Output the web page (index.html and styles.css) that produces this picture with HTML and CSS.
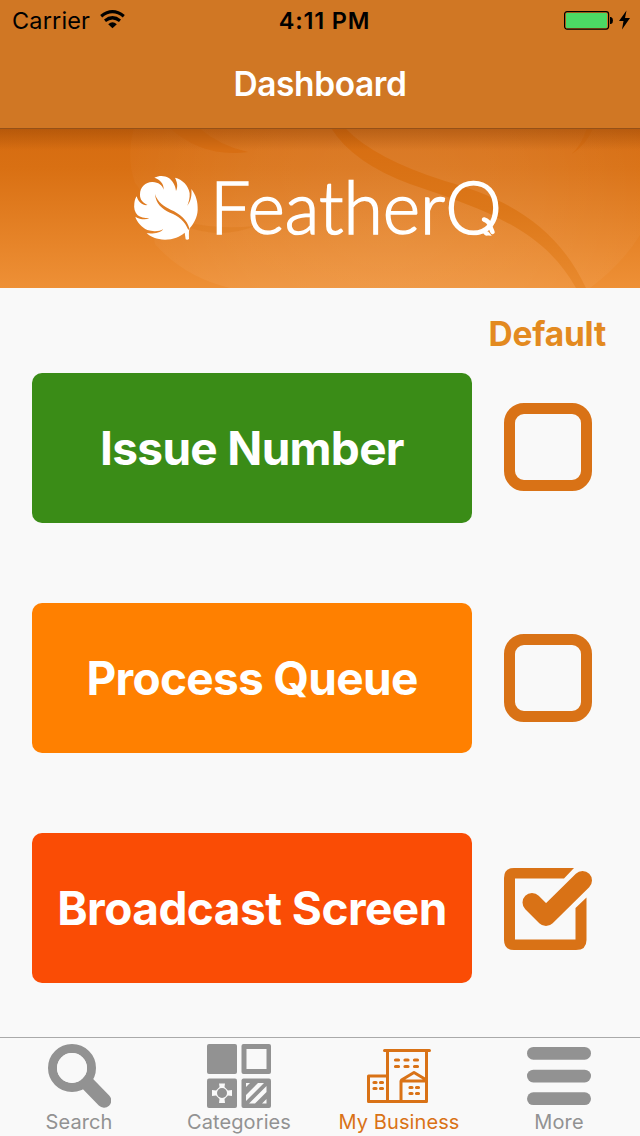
FILE: index.html
```html
<!DOCTYPE html>
<html lang="en">
<head>
<meta charset="utf-8">
<title>Dashboard</title>
<link rel="stylesheet" href="styles.css">
</head>
<body>
<header class="header">
  <div class="status">
    <div class="carrier"><span class="carrier-name">Carrier</span>
      <svg class="wifi" width="25" height="19" viewBox="0 0 25 19"><g fill="none" stroke="#000" stroke-width="3.2"><path d="M1.2 6.2Q12.500-2.800 23.800 6.200"/><path d="M5 10.700Q12.500 4.800 20 10.700"/></g><path d="M8.200 14.200Q12.500 10.500 16.800 14.200L12.500 18.300Z"/></svg>
    </div>
    <span class="time">4:11 PM</span>
    <svg class="battery" width="67" height="22" viewBox="0 0 67 22"><rect x="1.600" y="2.600" width="44" height="17.500" rx="2.500" fill="none" stroke="#000" stroke-width="1.200"/><rect x="3" y="4" width="41" height="15" rx="1" fill="#4cd964"/><path d="M47 8h1q2 .5 2 3.500t-2 3.500h-1z"/><path d="M63.500 1.500L56 12h4.500l-1.500 8.500L67 9h-5z"/></svg>
  </div>
  <h1 class="title">Dashboard</h1>
</header>
<section class="banner">
  <svg width="640" height="160" viewBox="0 128 640 160">
    <defs>
      <linearGradient id="bg" x1="0" y1="0" x2="0" y2="1"><stop offset="0" stop-color="#d56b10"/><stop offset=".25" stop-color="#d97013"/><stop offset="1" stop-color="#ee9036"/></linearGradient>
      <radialGradient id="glow" gradientUnits="userSpaceOnUse" cx="390" cy="225" r="285"><stop offset="0" stop-color="#fff" stop-opacity=".1"/><stop offset=".5" stop-color="#fff" stop-opacity=".07"/><stop offset="1" stop-color="#fff" stop-opacity=".015"/></radialGradient>
      <linearGradient id="vein" x1="0" y1="0" x2="0" y2="1"><stop offset="0" stop-color="#d66c10"/><stop offset=".5" stop-color="#dc7719"/><stop offset="1" stop-color="#e98a2e"/></linearGradient>
      <linearGradient id="shade" x1="0" y1="0" x2="0" y2="1"><stop offset="0" stop-color="#803800" stop-opacity=".38"/><stop offset=".4" stop-color="#803800" stop-opacity=".23"/><stop offset="1" stop-color="#803800" stop-opacity="0"/></linearGradient>
      <clipPath id="baseline"><path d="M200 170h320v65.500H200z"/></clipPath>
    </defs>
    <path fill="url(#bg)" d="M0 128h640v160H0z"/>
    <path fill="url(#glow)" d="M134 128Q126 157 135 183Q148 197 155 244Q184 277 230 288H590Q622 264 640 235V128Z"/>
    <path fill="url(#vein)" d="M331 128Q353 163 410 184C490 211 544 231 576 288H586C556 224 505 198 445 181Q375 159 345 128Z"/>
    <path fill="#d76e13" d="M170 128Q203 158 248 152Q220 146 199 128ZM587 128Q582 144 572 154Q586 145 593 128Z"/>
    <path fill="#d87515" opacity=".3" d="M185 226Q220 240 255 226Q220 230 185 222Z"/>
    <path fill="url(#shade)" d="M0 128h640v22H0z"/>
    <path fill="#955118" d="M0 128h640v1H0z"/>
    <g transform="translate(120 165) scale(.33333)">
      <path fill="#fff" d="M103 38C120 30 135 33 145 38C158 46 167 62 168 78C175 63 171 51 165 38C187 43 206 62 209 85C210 100 206 112 202 122C213 108 216 90 214 72C228 90 234 110 233 135C232 157 222 175 209 190Q206 195 207 222Q202 226 197 223L194 203C180 215 160 224 135 224C110 224 92 216 80 205C98 206 121 206 130 192C118 200 98 200 82 195C65 187 50 170 46 155C60 164 78 164 88 160C72 160 61 157 53 151C44 142 41 130 43 115C44 105 47 98 50 94C55 112 70 123 83 120C70 115 59 105 60 88C60 65 78 50 98 51C115 52 127 60 131 74C132 56 120 43 103 38Z"/>
      <path fill="#df7d24" d="M105 87C112 112 135 126 152 134C180 146 202 165 208 190L205 195C195 168 175 153 150 143C125 132 107 115 105 87Z"/>
    </g>
    <g clip-path="url(#baseline)"><text class="brand" x="210" y="234" textLength="292" lengthAdjust="spacingAndGlyphs">FeatherQ</text></g>
    <path d="M484 219.500Q489 221 490 226L492.500 232" fill="none" stroke="#fff" stroke-width="4.500" stroke-linecap="round"/>
  </svg>
</section>
<main class="content">
  <div class="default-label">Default</div>
  <div class="actions">
    <div class="row"><button class="action issue">Issue Number</button><span class="box first"></span></div>
    <div class="row"><button class="action process">Process Queue</button><span class="box"></span></div>
    <div class="row"><button class="action broadcast">Broadcast Screen</button>
      <svg class="checked" width="88" height="82" viewBox="0 0 88 82"><g fill="#d97216"><path d="M10 0H70L60 10.500H11V71.500H71.500V40L82.500 29.500V72Q82.500 82 72 82H10Q0 82 0 72V10Q0 0 10 0Z"/></g><path d="M28 34.500L42 48.500L78.500 12.500" fill="none" stroke="#d97216" stroke-width="19" stroke-linecap="round" stroke-linejoin="round"/></svg>
    </div>
  </div>
</main>
<nav class="tabs">
  <a class="tab search">
    <svg width="64" height="64" viewBox="-1 0 64 64"><circle cx="24" cy="24" r="19.500" fill="none" stroke="#929292" stroke-width="9"/><path d="M38 38L56 56.500" fill="none" stroke="#929292" stroke-width="14.500" stroke-linecap="round"/><circle cx="24" cy="24" r="15" fill="#f9f9f9"/></svg>
    <span>Search</span>
  </a>
  <a class="tab categories">
    <svg width="64" height="64" viewBox="0 0 64 64"><g fill="#929292"><rect width="30" height="30" rx="2"/><rect x="34.500" width="29.500" height="30" rx="2"/><rect y="34.500" width="30" height="29.500" rx="2"/><rect x="34.500" y="34.500" width="29.500" height="29.500" rx="2"/></g><path fill="#f9f9f9" d="M39.500 5h20v20h-20zM12 39.500h6l-.5 3.500 3.500 3.500 4-.5v6l-4-.5-3.500 3.500 .5 4h-6l.5-4-3.500-3.500-4 .5v-6l4 .5 3.500-3.500zM39 39h4l-4 4zM51 39h6L39 57v-6zM59.500 42v6L48 59.500h-6zM59.500 55v4.500H55z"/><circle cx="15" cy="49" r="5" fill="#929292"/></svg>
    <span>Categories</span>
  </a>
  <a class="tab business">
    <svg width="64" height="64" viewBox="0 0 64 64"><g fill="none" stroke="#d97216" stroke-width="3" stroke-linecap="round" stroke-linejoin="round"><path d="M17.500 6.500H62.500M20.500 6.500V57.500M59.500 6.500V57.500H1.500V32H20M34 57.500V37H59.500M34.500 36L47 28.500L59.500 36"/><path stroke-width="3.200" d="M28.500 16h3M38 16h3M47.500 16h3M28.500 22.500h3M38 22.500h3M47.500 22.500h3M7 38.500h2M13.500 38.500h2M7 44.500h2M13.500 44.500h2M43 43.500h2M49.500 43.500h2M43 49.500h2M49.500 49.500h2"/></g></svg>
    <span>My Business</span>
  </a>
  <a class="tab more">
    <svg width="64" height="64" viewBox="0 0 64 64"><g fill="#929292"><rect y="3" width="64" height="12.700" rx="6.350"/><rect y="25.700" width="64" height="12.700" rx="6.350"/><rect y="48.300" width="64" height="12.700" rx="6.350"/></g></svg>
    <span>More</span>
  </a>
</nav>
</body>
</html>
```
FILE: styles.css
```css
* { box-sizing: border-box; }
body {
  margin: 0;
  width: 640px;
  height: 1136px;
  display: flex;
  flex-direction: column;
  overflow: hidden;
  background: #f9f9f9;
  font-family: Inter, "Liberation Sans", sans-serif;
}
.header { height: 128px; background: #d07724; }
.status {
  display: grid;
  grid-template-columns: 1fr auto 1fr;
  align-items: center;
  height: 40px;
  padding: 0 10px 0 12px;
  color: #000;
}
.carrier { display: flex; align-items: center; gap: 10px; font-size: 23.5px; letter-spacing: 0.15px; }
.wifi { margin-bottom: 1px; }
.time { font-size: 23.5px; font-weight: 600; letter-spacing: 0.8px; padding-left: 7px; }
.battery { justify-self: end; }
.title {
  margin: 0;
  height: 88px;
  line-height: 88px;
  text-align: center;
  color: #fff;
  font-size: 33.500px;
  font-weight: 600;
  letter-spacing: -0.4px;
}
.banner { height: 160px; }
.banner svg { display: block; }
.brand { font-family: Lato, sans-serif; font-size: 72px; font-weight: 300; fill: #fff; stroke: #fff; stroke-width: 1.500px; }
.content { height: 749px; padding: 26px 32px 0; }
.default-label {
  height: 40px;
  line-height: 40px;
  text-align: right;
  padding-right: 2px;
  color: #e38a20;
  font-size: 33.500px;
  font-weight: 700;
  letter-spacing: -0.2px;
}
.actions { display: flex; flex-direction: column; gap: 80px; padding-top: 19px; }
.row { display: flex; align-items: center; gap: 32px; height: 150px; }
.action {
  width: 440px;
  height: 150px;
  padding: 0;
  border: 0;
  border-radius: 10px;
  color: #fff;
  font: 700 46px Inter, sans-serif;
  letter-spacing: -0.7px;
  white-space: nowrap;
}
.issue { background: #3a8c17; }
.process { background: #ff8000; }
.broadcast { background: #fa4c05; letter-spacing: -0.55px; }
.box { width: 88px; height: 88px; border: 11px solid #d97216; border-radius: 20px; }
.first { margin-bottom: 2px; }
.checked { margin-top: 2px; }
.tabs {
  height: 99px;
  display: grid;
  grid-template-columns: repeat(4, 160px);
  border-top: 1px solid #aaa;
}
.tab { display: flex; flex-direction: column; align-items: center; padding: 6px 2px 0 0; color: #929292; }
.tab svg { flex: none; display: block; }
.tab span { line-height: 28px; font-size: 20px; letter-spacing: 0.1px; white-space: nowrap; }
.business { color: #d97216; }
```
